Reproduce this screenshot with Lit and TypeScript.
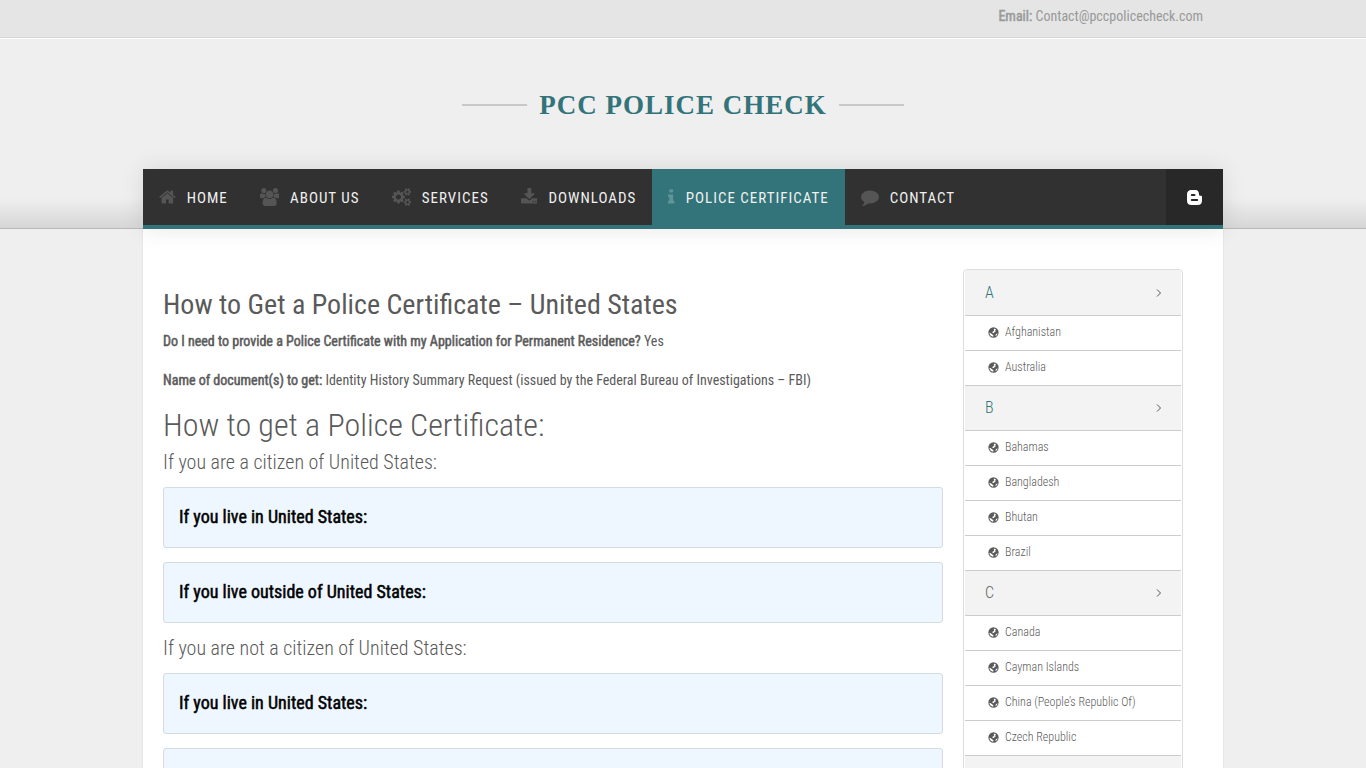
import { LitElement, html, css, svg } from "lit";
import { customElement } from "lit/decorators.js";

interface NavItem {
  label: string;
  icon: keyof typeof glyphs;
  active?: boolean;
}

// Font Awesome glyph outlines, drawn y-up on a 1792 unit em.
const glyphs = {
  home: { w: 1664, d: "M1408 544v-480q0 -26 -19 -45t-45 -19h-384v384h-256v-384h-384q-26 0 -45 19t-19 45v480q0 1 0.500 3t0.500 3l575 474l575 -474q1 -2 1 -6zM1631 613l-62 -74q-8 -9 -21 -11h-3q-13 0 -21 7l-692 577l-692 -577q-12 -8 -24 -7q-13 2 -21 11l-62 74q-8 10 -7 23.500t11 21.500 l719 599q32 26 76 26t76 -26l244 -204v195q0 14 9 23t23 9h192q14 0 23 -9t9 -23v-408l219 -182q10 -8 11 -21.500t-7 -23.500z" },
  users: { w: 1920, d: "M593 640q-162 -5 -265 -128h-134q-82 0 -138 40.500t-56 118.500q0 353 124 353q6 0 43.500 -21t97.500 -42.500t119 -21.500q67 0 133 23q-5 -37 -5 -66q0 -139 81 -256zM1664 3q0 -120 -73 -189.500t-194 -69.500h-874q-121 0 -194 69.500t-73 189.500q0 53 3.500 103.500t14 109t26.500 108.500 t43 97.500t62 81t85.500 53.500t111.500 20q10 0 43 -21.500t73 -48t107 -48t135 -21.500t135 21.500t107 48t73 48t43 21.500q61 0 111.500 -20t85.500 -53.500t62 -81t43 -97.500t26.500 -108.500t14 -109t3.500 -103.500zM640 1280q0 -106 -75 -181t-181 -75t-181 75t-75 181t75 181t181 75t181 -75 t75 -181zM1344 896q0 -159 -112.500 -271.500t-271.500 -112.500t-271.500 112.500t-112.500 271.500t112.500 271.500t271.500 112.500t271.500 -112.500t112.500 -271.500zM1920 671q0 -78 -56 -118.500t-138 -40.500h-134q-103 123 -265 128q81 117 81 256q0 29 -5 66q66 -23 133 -23q59 0 119 21.500t97.500 42.500 t43.500 21q124 0 124 -353zM1792 1280q0 -106 -75 -181t-181 -75t-181 75t-75 181t75 181t181 75t181 -75t75 -181z" },
  cogs: { w: 1920, d: "M896 640q0 106 -75 181t-181 75t-181 -75t-75 -181t75 -181t181 -75t181 75t75 181zM1664 128q0 52 -38 90t-90 38t-90 -38t-38 -90q0 -53 37.500 -90.500t90.500 -37.500t90.500 37.500t37.500 90.500zM1664 1152q0 52 -38 90t-90 38t-90 -38t-38 -90q0 -53 37.500 -90.500t90.500 -37.500 t90.500 37.500t37.500 90.500zM1280 731v-185q0 -10 -7 -19.500t-16 -10.500l-155 -24q-11 -35 -32 -76q34 -48 90 -115q7 -11 7 -20q0 -12 -7 -19q-23 -30 -82.500 -89.500t-78.500 -59.500q-11 0 -21 7l-115 90q-37 -19 -77 -31q-11 -108 -23 -155q-7 -24 -30 -24h-186q-11 0 -20 7.500t-10 17.500 l-23 153q-34 10 -75 31l-118 -89q-7 -7 -20 -7q-11 0 -21 8q-144 133 -144 160q0 9 7 19q10 14 41 53t47 61q-23 44 -35 82l-152 24q-10 1 -17 9.500t-7 19.500v185q0 10 7 19.500t16 10.500l155 24q11 35 32 76q-34 48 -90 115q-7 11 -7 20q0 12 7 20q22 30 82 89t79 59q11 0 21 -7 l115 -90q34 18 77 32q11 108 23 154q7 24 30 24h186q11 0 20 -7.500t10 -17.500l23 -153q34 -10 75 -31l118 89q8 7 20 7q11 0 21 -8q144 -133 144 -160q0 -8 -7 -19q-12 -16 -42 -54t-45 -60q23 -48 34 -82l152 -23q10 -2 17 -10.500t7 -19.500zM1920 198v-140q0 -16 -149 -31 q-12 -27 -30 -52q51 -113 51 -138q0 -4 -4 -7q-122 -71 -124 -71q-8 0 -46 47t-52 68q-20 -2 -30 -2t-30 2q-14 -21 -52 -68t-46 -47q-2 0 -124 71q-4 3 -4 7q0 25 51 138q-18 25 -30 52q-149 15 -149 31v140q0 16 149 31q13 29 30 52q-51 113 -51 138q0 4 4 7q4 2 35 20 t59 34t30 16q8 0 46 -46.500t52 -67.500q20 2 30 2t30 -2q51 71 92 112l6 2q4 0 124 -70q4 -3 4 -7q0 -25 -51 -138q17 -23 30 -52q149 -15 149 -31zM1920 1222v-140q0 -16 -149 -31q-12 -27 -30 -52q51 -113 51 -138q0 -4 -4 -7q-122 -71 -124 -71q-8 0 -46 47t-52 68 q-20 -2 -30 -2t-30 2q-14 -21 -52 -68t-46 -47q-2 0 -124 71q-4 3 -4 7q0 25 51 138q-18 25 -30 52q-149 15 -149 31v140q0 16 149 31q13 29 30 52q-51 113 -51 138q0 4 4 7q4 2 35 20t59 34t30 16q8 0 46 -46.500t52 -67.500q20 2 30 2t30 -2q51 71 92 112l6 2q4 0 124 -70 q4 -3 4 -7q0 -25 -51 -138q17 -23 30 -52q149 -15 149 -31z" },
  download: { w: 1664, d: "M1280 192q0 26 -19 45t-45 19t-45 -19t-19 -45t19 -45t45 -19t45 19t19 45zM1536 192q0 26 -19 45t-45 19t-45 -19t-19 -45t19 -45t45 -19t45 19t19 45zM1664 416v-320q0 -40 -28 -68t-68 -28h-1472q-40 0 -68 28t-28 68v320q0 40 28 68t68 28h465l135 -136 q58 -56 136 -56t136 56l136 136h464q40 0 68 -28t28 -68zM1339 985q17 -41 -14 -70l-448 -448q-18 -19 -45 -19t-45 19l-448 448q-31 29 -14 70q17 39 59 39h256v448q0 26 19 45t45 19h256q26 0 45 -19t19 -45v-448h256q42 0 59 -39z" },
  info: { w: 640, d: "M640 192v-128q0 -26 -19 -45t-45 -19h-512q-26 0 -45 19t-19 45v128q0 26 19 45t45 19h64v384h-64q-26 0 -45 19t-19 45v128q0 26 19 45t45 19h384q26 0 45 -19t19 -45v-576h64q26 0 45 -19t19 -45zM512 1344v-192q0 -26 -19 -45t-45 -19h-256q-26 0 -45 19t-19 45v192 q0 26 19 45t45 19h256q26 0 45 -19t19 -45z" },
  comment: { w: 1792, d: "M1792 640q0 -174 -120 -321.500t-326 -233t-450 -85.500q-70 0 -145 8q-198 -175 -460 -242q-49 -14 -114 -22q-17 -2 -30.500 9t-17.500 29v1q-3 4 -0.500 12t2 10t4.500 9.500l6 9t7 8.500t8 9q7 8 31 34.500t34.500 38t31 39.500t32.500 51t27 59t26 76q-157 89 -247.500 220t-90.500 281 q0 130 71 248.500t191 204.500t286 136.500t348 50.500q244 0 450 -85.500t326 -233t120 -321.500z" },
};

const icon = (name: keyof typeof glyphs) => svg`
  <svg class="glyph" viewBox=${`0 -1536 ${glyphs[name].w} 1792`} aria-hidden="true">
    <path transform="scale(1 -1)" d=${glyphs[name].d}></path>
  </svg>`;

// A disc with the oceans cut out of it.
const globe = html`<svg class="globe" viewBox="0 0 16 16" aria-hidden="true">
  <path fill-rule="evenodd" d="M8 0.500A7.500 7.500 0 1 0 8 15.500A7.500 7.500 0 1 0 8 0.500zM9.500 2.200L11.500 3.200L10.500 5L11.500 6L9.300 7.200L8.800 9L7 8.300L5.800 7.400L7.600 6.500L9 5L8.300 3.600zM2 8.500L4 9.200L6.500 10.800L8 12.200L7.500 14.200C4.500 14 2.300 11.500 2 8.500zM12.300 9.800L14 9.600C13.600 11.200 12.600 12.500 11.300 13.300L10.900 11.600z"></path>
</svg>`;

const navItems: NavItem[] = [
  { label: "Home", icon: "home" },
  { label: "About Us", icon: "users" },
  { label: "Services", icon: "cogs" },
  { label: "Downloads", icon: "download" },
  { label: "Police Certificate", icon: "info", active: true },
  { label: "Contact", icon: "comment" },
];

const countries: [string, string[]][] = [
  ["A", ["Afghanistan", "Australia"]],
  ["B", ["Bahamas", "Bangladesh", "Bhutan", "Brazil"]],
  ["C", ["Canada", "Cayman Islands", "China (People’s Republic Of)", "Czech Republic"]],
];

@customElement("app-root")
export class AppRoot extends LitElement {
  static styles = css`
    :host {
      display: block;
      height: 100vh;
      overflow: hidden;
      background: #efefef;
      color: #5a5a5a;
      font: 14px/24px "Roboto Condensed", "Liberation Sans Narrow", sans-serif;
    }
    * { box-sizing: border-box; }
    a { color: inherit; text-decoration: none; }
    h1, h2, h3, p, ul { margin: 0; padding: 0; font-weight: inherit; }
    b { font-weight: 400; -webkit-text-stroke: 0.5px currentColor; }
    ul { list-style: none; }
    .glyph, .globe { display: block; flex: none; fill: currentColor; }
    .wrap { max-width: 1080px; margin: 0 auto; }
    .topbar {
      background: #e5e5e5;
      border-bottom: 1px solid #d5d5d5;
      color: #999;
    }
    .email { padding: 4px 20px 9px; text-align: right; }
    .header {
      border-top: 1px solid #fff;
      border-bottom: 1px solid #b9b9b9;
      background: linear-gradient(to top, #d6d6d6, #efefef 30px);
    }
    .brand {
      display: flex;
      align-items: center;
      justify-content: center;
      gap: 12px;
      height: 130px;
      padding-top: 2px;
      color: #327479;
      font: bold 27px/36px "Liberation Serif", serif;
      letter-spacing: 1px;
    }
    .rule { width: 65px; height: 2px; background: #c8c8c8; }
    .nav {
      position: relative;
      display: flex;
      margin-bottom: -1px;
      background: #313131;
      border-bottom: 4px solid #327479;
      box-shadow: 0 0 25px rgba(0, 0, 0, 0.1);
      color: #f0f0f0;
      font-size: 15px;
      letter-spacing: 1px;
      text-transform: uppercase;
    }
    .tab {
      display: flex;
      align-items: center;
      gap: 11px;
      height: 56px;
      padding: 2px 16px 0;
    }
    .tab .glyph { height: 18px; margin-bottom: 2px; color: #555; }
    .tab.active { background: #327479; }
    .tab.active .glyph { color: #5e9599; }
    .social {
      display: flex;
      align-items: center;
      justify-content: center;
      width: 57px;
      margin-left: auto;
      background: #282828;
    }
    .page {
      display: grid;
      grid-template-columns: minmax(0, 1fr) 220px;
      gap: 20px;
      align-items: start;
      padding: 40px 40px 40px 20px;
      background: #fff;
      box-shadow: 0 0 2px rgba(0, 0, 0, 0.1);
    }
    .main { padding-top: 16px; }
    .title { font-size: 28px; line-height: 40px; }
    .fact { margin-top: 4px; }
    .fact + .fact { margin-top: 15px; }
    .subtitle { margin-top: 13px; font-size: 32px; line-height: 40px; font-weight: 300; }
    .case { font-size: 20px; line-height: 22px; font-weight: 300; margin: 6px 0 14px; }
    .box {
      margin-bottom: 14px;
      padding: 14px 15px 16px;
      border: 1px solid #d3dce3;
      border-radius: 3px;
      background: #eef7ff;
      color: #000;
      font-size: 18px;
      line-height: 29px;
      -webkit-text-stroke: 0.5px currentColor;
    }
    .index {
      padding: 0 1px;
      border: 1px solid #ddd;
      border-radius: 4px;
      overflow: hidden;
      font-weight: 300;
    }
    .letter {
      display: flex;
      align-items: center;
      justify-content: space-between;
      height: 45px;
      padding: 0 19px 0 20px;
      background: #f3f3f3;
      border-bottom: 1px solid #ccc;
      color: #327479;
      font-size: 16px;
    }
    .index > .letter:first-child { height: 46px; }
    .letter.current { color: #666; }
    .chevron { width: 6px; height: 8px; stroke: #555; fill: none; }
    .country {
      display: flex;
      align-items: center;
      gap: 6px;
      height: 35px;
      padding: 0 0 2px 23px;
      border-bottom: 1px solid #ccc;
      font-size: 12px;
    }
    .globe { width: 11px; height: 11px; }
    .more { height: 45px; background: #f3f3f3; }
  `;

  render() {
    return html`
      <div class="topbar">
        <div class="wrap email"><b>Email:</b> <a href="mailto:Contact@pccpolicecheck.com">Contact@pccpolicecheck.com</a></div>
      </div>
      <header class="header">
        <a class="brand" href="#"><span class="rule"></span>PCC POLICE CHECK<span class="rule"></span></a>
        <nav class="nav wrap">
          ${navItems.map((n) => html`<a class="tab ${n.active ? "active" : ""}" href="#">${icon(n.icon)}${n.label}</a>`)}
          <a class="social" href="#" aria-label="Blogger">
            <svg width="15" height="15" viewBox="0 0 15 15" aria-hidden="true">
              <path fill="#fff" fill-rule="evenodd" d="M4.500 0H8C11 0 12 2 12 4.500C12 5.500 12.500 5.700 13.500 5.700C14.600 5.700 15 6 15 7V10.500C15 13.500 13.500 15 10.500 15H4.500C1.500 15 0 13.500 0 10.500V4.500C0 1.500 1.500 0 4.500 0zM4.800 4A1 1 0 0 0 4.800 6H7.500A1 1 0 0 0 7.500 4zM4.800 9A1 1 0 0 0 4.800 11H10.200A1 1 0 0 0 10.200 9z"></path>
            </svg>
          </a>
        </nav>
      </header>
      <div class="page wrap">
        <main class="main">
          <h1 class="title">How to Get a Police Certificate – United States</h1>
          <p class="fact"><b>Do I need to provide a Police Certificate with my Application for Permanent Residence?</b> Yes</p>
          <p class="fact"><b>Name of document(s) to get:</b> Identity History Summary Request (issued by the Federal Bureau of Investigations – FBI)</p>
          <h2 class="subtitle">How to get a Police Certificate:</h2>
          <h3 class="case">If you are a citizen of United States:</h3>
          <div class="box">If you live in United States:</div>
          <div class="box">If you live outside of United States:</div>
          <h3 class="case">If you are not a citizen of United States:</h3>
          <div class="box">If you live in United States:</div>
          <div class="box">&nbsp;</div>
        </main>
        <aside class="index">
          ${countries.map(([letter, names]) => html`
            <a class="letter ${letter === "C" ? "current" : ""}" href="#">${letter}<svg class="chevron" viewBox="0 0 6 8" aria-hidden="true"><path d="M1 0.500L4.500 4L1 7.500"></path></svg></a>
            <ul>${names.map((c) => html`<li><a class="country" href="#">${globe}${c}</a></li>`)}</ul>`)}
          <div class="more"></div>
        </aside>
      </div>
    `;
  }
}
